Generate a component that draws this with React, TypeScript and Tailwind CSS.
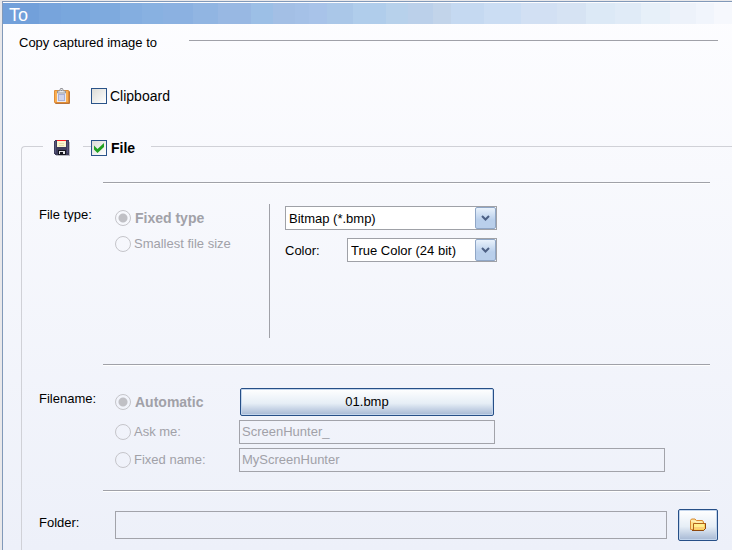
import type { ReactNode } from "react";

// Colour bands of the title bar: [end position in percent, colour].
const TITLE_BANDS: [number, string][] = [
  [5, "#72a0da"],
  [8, "#77a4dc"],
  [12, "#79a7dd"],
  [16, "#7eaade"],
  [19, "#84aee0"],
  [22, "#88b1e1"],
  [26, "#8bb1e1"],
  [29.5, "#91b5e2"],
  [34, "#98b8e3"],
  [37, "#9cbfe6"],
  [40, "#a3bfe5"],
  [42, "#a5c1e7"],
  [44.5, "#a8c3e9"],
  [48, "#aac7e8"],
  [52.5, "#b0cdeb"],
  [55.5, "#b7d1eb"],
  [59, "#bbd0ea"],
  [61.5, "#c2d4ea"],
  [66, "#c5d9f1"],
  [71, "#cbddf3"],
  [76, "#d2e0f3"],
  [80, "#d6e3f3"],
  [84, "#dce9f6"],
  [87.5, "#e0ebf7"],
  [91.5, "#e7f0f9"],
  [95, "#edf2fa"],
  [97.5, "#f1f5fc"],
  [100, "#f6f8fd"],
];

const titleGradient = `linear-gradient(to right, ${TITLE_BANDS.map(
  ([end, color], i) => `${color} ${i === 0 ? 0 : TITLE_BANDS[i - 1][0]}% ${end}%`,
).join(", ")})`;

function ClipboardIcon() {
  return (
    <svg width="17" height="18" viewBox="0 0 17 18" aria-hidden="true">
      <rect x="1" y="4" width="15" height="13" rx="1" fill="#b9743c" />
      <rect x="0" y="3" width="15" height="13" rx="1" fill="#e08d35" />
      <rect x="1" y="4" width="13" height="11" fill="#f9ae52" />
      <path d="M3 4h9v11H3z" fill="#e9e9f3" />
      <path d="M4 7h7v7H4z" fill="#a9b0d4" />
      <path d="M5 8h5v5H5z" fill="#cfd4ec" />
      <path d="M3.500 6V4h2L6.500 1.500h2L9.500 4h2v2z" fill="#ececec" stroke="#95959a" />
      <path d="M6.500 3.500h2" stroke="#8a8a90" />
    </svg>
  );
}

function FloppyIcon() {
  return (
    <svg width="17" height="17" viewBox="0 0 17 17" aria-hidden="true" shapeRendering="crispEdges">
      <path d="M2 2h14v14H2z" fill="#b9b9c0" />
      <path d="M0 1l1-1h13l1 1v14H1l-1-1z" fill="#3e3d5c" />
      <path d="M1 1h1v12H1zM13 1h1v12h-1z" fill="#57567a" />
      <path d="M3 0h9v1H3z" fill="#fb1d22" />
      <path d="M3 1h9v6H3z" fill="#fbf6cf" />
      <path d="M5 3h5v1H5zM5 5h5v1H5z" fill="#e3dcab" />
      <path d="M4 10h8v5H4z" fill="#17171f" />
      <path d="M5 11h6v3H5z" fill="#e6e6ea" />
      <path d="M6 12h3v3H6z" fill="#17171f" />
    </svg>
  );
}

function FolderIcon() {
  return (
    <svg width="17" height="14" viewBox="0 0 17 14" aria-hidden="true">
      <path d="M0.500 11.500v-9l1-1.500H5l1.500 1.500h6l1 1.500v7z" fill="#fde08a" stroke="#d98a35" />
      <path d="M1 3h4l1 1h6" fill="none" stroke="#fff6cc" />
      <path d="M3.500 5.500h12v5l-2 2h-10z" fill="#fbd15c" stroke="#b0621a" strokeLinejoin="round" />
      <path d="M4 6h10v3H4z" fill="#fff08e" />
      <path d="M4 9h10v2H4z" fill="#fdcf78" />
      <path d="M15.500 5.500v5l-2 2H2" fill="none" stroke="#8e480e" />
    </svg>
  );
}

function Separator() {
  return <div className="mr-[22px] ml-16 h-0.5 border-t border-b border-t-[#a0a1a8] border-b-white" />;
}

interface CheckProps {
  label: string;
  checked?: boolean;
  bold?: boolean;
}

function Check({ label, checked, bold }: CheckProps) {
  return (
    <label className={bold ? "flex items-center gap-1 text-sm font-bold" : "flex items-center gap-[3px] text-sm"}>
      <span className="relative block size-4">
        <input
          type="checkbox"
          defaultChecked={checked}
          className="peer block size-4 appearance-none border border-[#2a5389] bg-linear-to-br from-[#dcdcd7] to-white"
        />
        <svg
          viewBox="0 0 16 16"
          aria-hidden="true"
          className="pointer-events-none absolute inset-0 hidden size-4 peer-checked:block"
        >
          <path d="M3 5.500v4l3.500 3.500L13 7V3L6.500 9z" fill="#21a121" />
        </svg>
      </span>
      {label}
    </label>
  );
}

interface RadioProps {
  name: string;
  label: string;
  checked?: boolean;
}

function Radio({ name, label, checked }: RadioProps) {
  return (
    <label
      className={
        checked
          ? "flex w-[124px] shrink-0 items-center gap-1 text-sm font-bold whitespace-nowrap text-[#a1a1a8]"
          : "flex w-[124px] shrink-0 items-center gap-[3px] whitespace-nowrap text-[#a1a1a8]"
      }
    >
      <input
        type="radio"
        name={name}
        defaultChecked={checked}
        disabled
        className="size-4 shrink-0 appearance-none rounded-full border border-[#c5c5ca] bg-transparent checked:bg-radial checked:from-[#c0c0c5] checked:from-[4px] checked:to-transparent checked:to-[5px]"
      />
      {label}
    </label>
  );
}

interface DropDownProps {
  id: string;
  label?: string;
  className: string;
  children: ReactNode;
}

function DropDown({ id, label, className, children }: DropDownProps) {
  return (
    <div className={`relative h-6 ${className}`}>
      <select
        id={id}
        aria-label={label}
        className="block h-full w-full appearance-none border border-[#9fa1a7] bg-white pt-px pr-6 pl-[3px] text-[13px]"
      >
        {children}
      </select>
      <span className="pointer-events-none absolute inset-y-px right-px flex w-[21px] items-center justify-center rounded-xs border border-[#8fa6c6] bg-linear-to-b from-[#e9f2fc] to-[#b9cfeb] to-60%">
        <svg width="9" height="7" viewBox="0 0 9 7" aria-hidden="true">
          <path d="M1 1l3.500 3.500L8 1" fill="none" stroke="#4d6185" strokeWidth="2" />
        </svg>
      </span>
    </div>
  );
}

const glossy =
  "rounded-xs border border-[#264f87] bg-linear-to-b from-white via-[#e6eef6] via-55% to-[#a6b8d4] shadow-[inset_0_0_0_1px_#c3d5ec]";

const disabledField = "h-6 border border-[#a2a3aa] bg-transparent px-0.5 pb-0.5 text-[13px] text-[#a1a1a8]";

export default function App() {
  return (
    <div className="flex min-h-screen flex-col bg-[#e9e8ea] pt-px pl-0.5 font-['Liberation_Sans',Arial,sans-serif] text-[13px] leading-5 text-black">
      <main className="flex flex-1 flex-col border-t border-l border-[#8199b9] bg-linear-to-b from-[#fdfdff] to-[#edf0f9] pt-px">
        <h1 className="h-[21px] pl-1.5 text-lg leading-6 text-white" style={{ background: titleGradient }}>
          To
        </h1>

        <div className="flex h-9 items-center gap-8 pr-3.5 pl-4">
          <h2 className="pt-px">Copy captured image to</h2>
          <div className="h-1 flex-1 border-t border-[#a0a1a8]" />
        </div>

        <div className="mt-6 flex h-6 items-center gap-5 pl-[51px]">
          <ClipboardIcon />
          <Check label="Clipboard" />
        </div>

        <section className="mt-7 ml-[18px] flex flex-1 flex-col">
          <div className="flex h-6 items-center">
            <span className="h-3.5 w-[22px] self-end rounded-tl-sm border-t border-l border-[#d0d1d7]" />
            <span className="mr-3 ml-[11px]">
              <FloppyIcon />
            </span>
            <span className="h-1 w-2 border-t border-[#d0d1d7]" />
            <Check label="File" checked bold />
            <span className="ml-4 h-1 flex-1 border-t border-[#d0d1d7]" />
          </div>

          <div className="flex-1 border-l border-[#d0d1d7] pt-[22px] pb-2 pl-[17px]">
            <Separator />

            <div className="mt-5 flex">
              <h3 className="w-[76px] shrink-0 pt-px">File type:</h3>
              <div className="flex w-[154px] shrink-0 flex-col gap-0.5 pt-0.5">
                <div className="flex h-6">
                  <Radio name="type" label="Fixed type" checked />
                </div>
                <div className="flex h-6">
                  <Radio name="type" label="Smallest file size" />
                </div>
              </div>
              <div className="flex h-[134px] flex-col gap-2 border-l border-[#a0a1a8] pt-0.5 pl-[15px]">
                <DropDown id="format" label="Format" className="w-[212px]">
                  <option>Bitmap (*.bmp)</option>
                </DropDown>
                <div className="flex items-center justify-between">
                  <label htmlFor="color" className="pt-px">
                    Color:
                  </label>
                  <DropDown id="color" className="w-[150px]">
                    <option>True Color (24 bit)</option>
                  </DropDown>
                </div>
              </div>
            </div>

            <div className="h-[26px]" />
            <Separator />

            <div className="mt-[21px] flex">
              <h3 className="w-[76px] shrink-0 pt-0.5">Filename:</h3>
              <div className="flex flex-1 flex-col gap-1">
                <div className="flex h-[29px] items-center">
                  <Radio name="filename" label="Automatic" checked />
                  <button type="button" className={`mx-px h-7 w-[254px] ${glossy}`}>
                    01.bmp
                  </button>
                </div>
                <div className="flex items-center">
                  <Radio name="filename" label="Ask me:" />
                  <input aria-label="Ask me" disabled defaultValue="ScreenHunter_" className={`w-64 ${disabledField}`} />
                </div>
                <div className="flex items-center pr-[67px]">
                  <Radio name="filename" label="Fixed name:" />
                  <input
                    aria-label="Fixed name"
                    disabled
                    defaultValue="MyScreenHunter"
                    className={`min-w-0 flex-1 ${disabledField}`}
                  />
                </div>
              </div>
            </div>

            <div className="h-[18px]" />
            <Separator />

            <div className="mt-[17px] flex items-center pr-3.5">
              <label htmlFor="folder" className="w-[76px] shrink-0 pb-1">
                Folder:
              </label>
              <input
                id="folder"
                disabled
                className="mr-[11px] h-7 min-w-0 flex-1 border border-[#a2a3aa] bg-transparent px-1"
              />
              <button
                type="button"
                aria-label="Browse"
                className={`flex h-8 w-10 items-center justify-center ${glossy}`}
              >
                <FolderIcon />
              </button>
            </div>
          </div>
        </section>
      </main>
    </div>
  );
}
